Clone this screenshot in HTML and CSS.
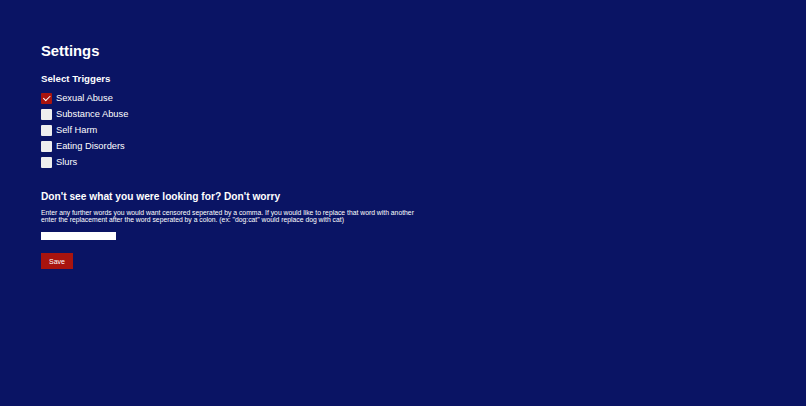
FILE: index.html
```html
<!DOCTYPE html>
<html lang="en">
<head>
<meta charset="utf-8">
<title>Settings</title>
<link rel="stylesheet" href="styles.css">
</head>
<body>
<main class="page">
  <h1 class="title">Settings</h1>
  <h2 class="subtitle">Select Triggers</h2>
  <ul class="triggers">
    <li class="trigger"><input type="checkbox" class="box" checked><span class="label">Sexual Abuse</span></li>
    <li class="trigger"><input type="checkbox" class="box"><span class="label">Substance Abuse</span></li>
    <li class="trigger"><input type="checkbox" class="box"><span class="label">Self Harm</span></li>
    <li class="trigger"><input type="checkbox" class="box"><span class="label">Eating Disorders</span></li>
    <li class="trigger"><input type="checkbox" class="box"><span class="label">Slurs</span></li>
  </ul>
  <h2 class="heading">Don't see what you were looking for? Don't worry</h2>
  <p class="help">Enter any further words you would want censored seperated by a comma. If you would like to replace that word with another<br>enter the replacement after the word seperated by a colon. (ex: "dog:cat" would replace dog with cat)</p>
  <input type="text" class="words">
  <button class="save">Save</button>
</main>
</body>
</html>
```

FILE: styles.css
```css
html, body {
  margin: 0;
  padding: 0;
  height: 100%;
}
body {
  background: #0a1464;
  color: #ffffff;
  font-family: "Liberation Sans", Arial, sans-serif;
}
.page {
  display: flex;
  flex-direction: column;
  align-items: flex-start;
  padding: 42px 0 0 41px;
}
.title {
  margin: 0;
  font-size: 14.8px;
  line-height: 18px;
  font-weight: bold;
}
.subtitle {
  margin: 13px 0 0;
  font-size: 9.7px;
  line-height: 12px;
  font-weight: bold;
}
.triggers {
  list-style: none;
  margin: 5px 0 0;
  padding: 0;
}
.trigger {
  display: flex;
  align-items: center;
  height: 16px;
}
.box {
  appearance: none;
  -webkit-appearance: none;
  width: 11px;
  height: 11px;
  margin: 0 4px 0 0;
  background: #eeeeee;
  border-radius: 1px;
  position: relative;
}
.box:checked {
  background: #a8140e;
}
.box:checked::after {
  content: "";
  position: absolute;
  left: 3.5px;
  top: 1.5px;
  width: 3px;
  height: 5.5px;
  border: solid #ffffff;
  border-width: 0 1.5px 1.5px 0;
  transform: rotate(45deg);
}
.label {
  font-size: 9.3px;
  line-height: 16px;
}
.heading {
  margin: 20px 0 0;
  font-size: 10.2px;
  line-height: 13px;
  font-weight: bold;
}
.help {
  margin: 6px 0 0;
  font-size: 6.8px;
  line-height: 7px;
}
.words {
  margin: 9px 0 0;
  width: 75px;
  height: 8px;
  padding: 0;
  border: 0;
  background: #ffffff;
}
.save {
  margin: 13px 0 0;
  width: 32px;
  height: 16px;
  padding: 0;
  border: 0;
  background: #a8140e;
  color: #ffffff;
  font-family: "Liberation Sans", Arial, sans-serif;
  font-size: 7px;
}
```
